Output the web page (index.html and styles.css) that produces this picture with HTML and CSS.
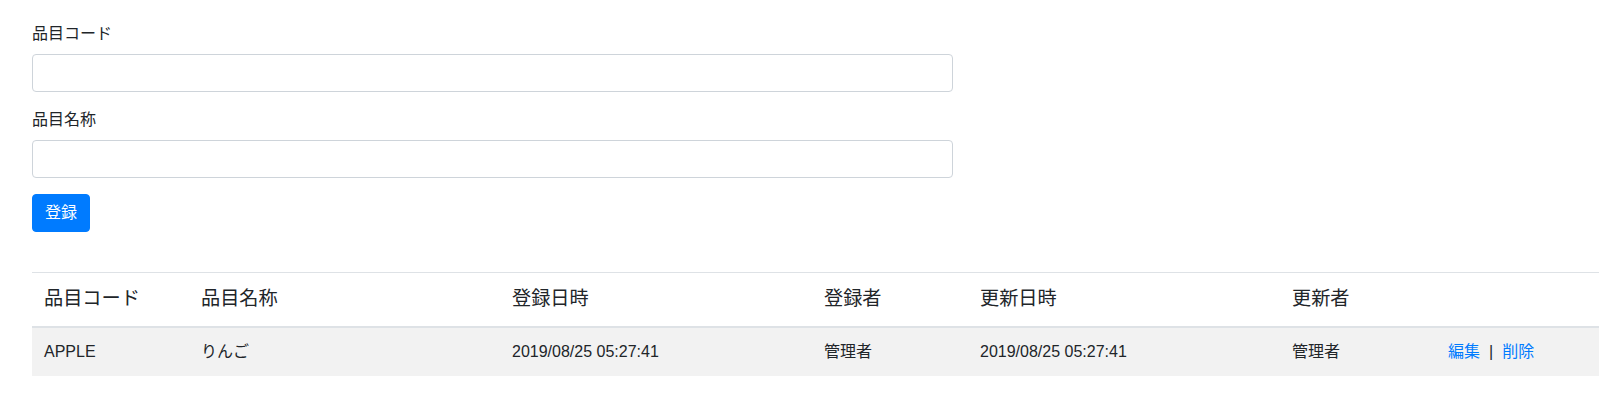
FILE: index.html
```html
<!DOCTYPE html>
<html lang="ja">
<head>
<meta charset="utf-8">
<title>品目</title>
<link rel="stylesheet" href="styles.css">
</head>
<body>
<main class="page">
  <form class="item-form">
    <div class="form-group">
      <label class="form-label" for="code">品目コード</label>
      <input class="form-input" id="code" type="text">
    </div>
    <div class="form-group">
      <label class="form-label" for="name">品目名称</label>
      <input class="form-input" id="name" type="text">
    </div>
    <button class="btn-primary" type="button">登録</button>
  </form>

  <table class="item-table">
    <colgroup>
      <col class="col-code">
      <col class="col-name">
      <col class="col-date">
      <col class="col-user">
      <col class="col-date">
      <col class="col-user">
      <col class="col-actions">
    </colgroup>
    <thead>
      <tr>
        <th>品目コード</th>
        <th>品目名称</th>
        <th>登録日時</th>
        <th>登録者</th>
        <th>更新日時</th>
        <th>更新者</th>
        <th></th>
      </tr>
    </thead>
    <tbody>
      <tr>
        <td>APPLE</td>
        <td>りんご</td>
        <td>2019/08/25 05:27:41</td>
        <td>管理者</td>
        <td>2019/08/25 05:27:41</td>
        <td>管理者</td>
        <td><a class="link" href="#">編集</a><span class="sep">|</span><a class="link" href="#">削除</a></td>
      </tr>
    </tbody>
  </table>
</main>
</body>
</html>
```

FILE: styles.css
```css
html, body {
  margin: 0;
  padding: 0;
  background: #fff;
  overflow: hidden;
}

body {
  font-family: "Liberation Sans", "Noto Sans CJK JP", sans-serif;
  font-size: 16px;
  line-height: 1.5;
  color: #212529;
}

.page {
  padding: 22px 0 0 32px;
}

.item-form {
  width: 921px;
  margin-bottom: 40px;
}

.form-group {
  margin-bottom: 16px;
}

.form-label {
  display: block;
  margin-bottom: 8px;
}

.form-input {
  display: block;
  box-sizing: border-box;
  width: 100%;
  height: 38px;
  padding: 6px 12px;
  font: inherit;
  color: #495057;
  background: #fff;
  border: 1px solid #ced4da;
  border-radius: 4px;
}

.btn-primary {
  display: inline-block;
  box-sizing: border-box;
  height: 38px;
  padding: 6px 12px;
  font: inherit;
  color: #fff;
  background: #007bff;
  border: 1px solid #007bff;
  border-radius: 4px;
}

.item-table {
  width: 100%;
  table-layout: fixed;
  border-collapse: collapse;
}

.col-code { width: 157px; }
.col-name { width: 311px; }
.col-date { width: 312px; }
.col-user { width: 156px; }

.item-table th,
.item-table td {
  padding: 12px;
  text-align: left;
  vertical-align: top;
  border-top: 1px solid #dee2e6;
  white-space: nowrap;
}

.item-table th {
  font-weight: normal;
  font-size: 19.2px;
  line-height: 28.8px;
  border-bottom: 2px solid #dee2e6;
}

.item-table tbody tr:nth-of-type(odd) {
  background: #f2f2f2;
}

.link {
  color: #007bff;
  text-decoration: none;
}

.sep {
  margin: 0 9px;
}
```
